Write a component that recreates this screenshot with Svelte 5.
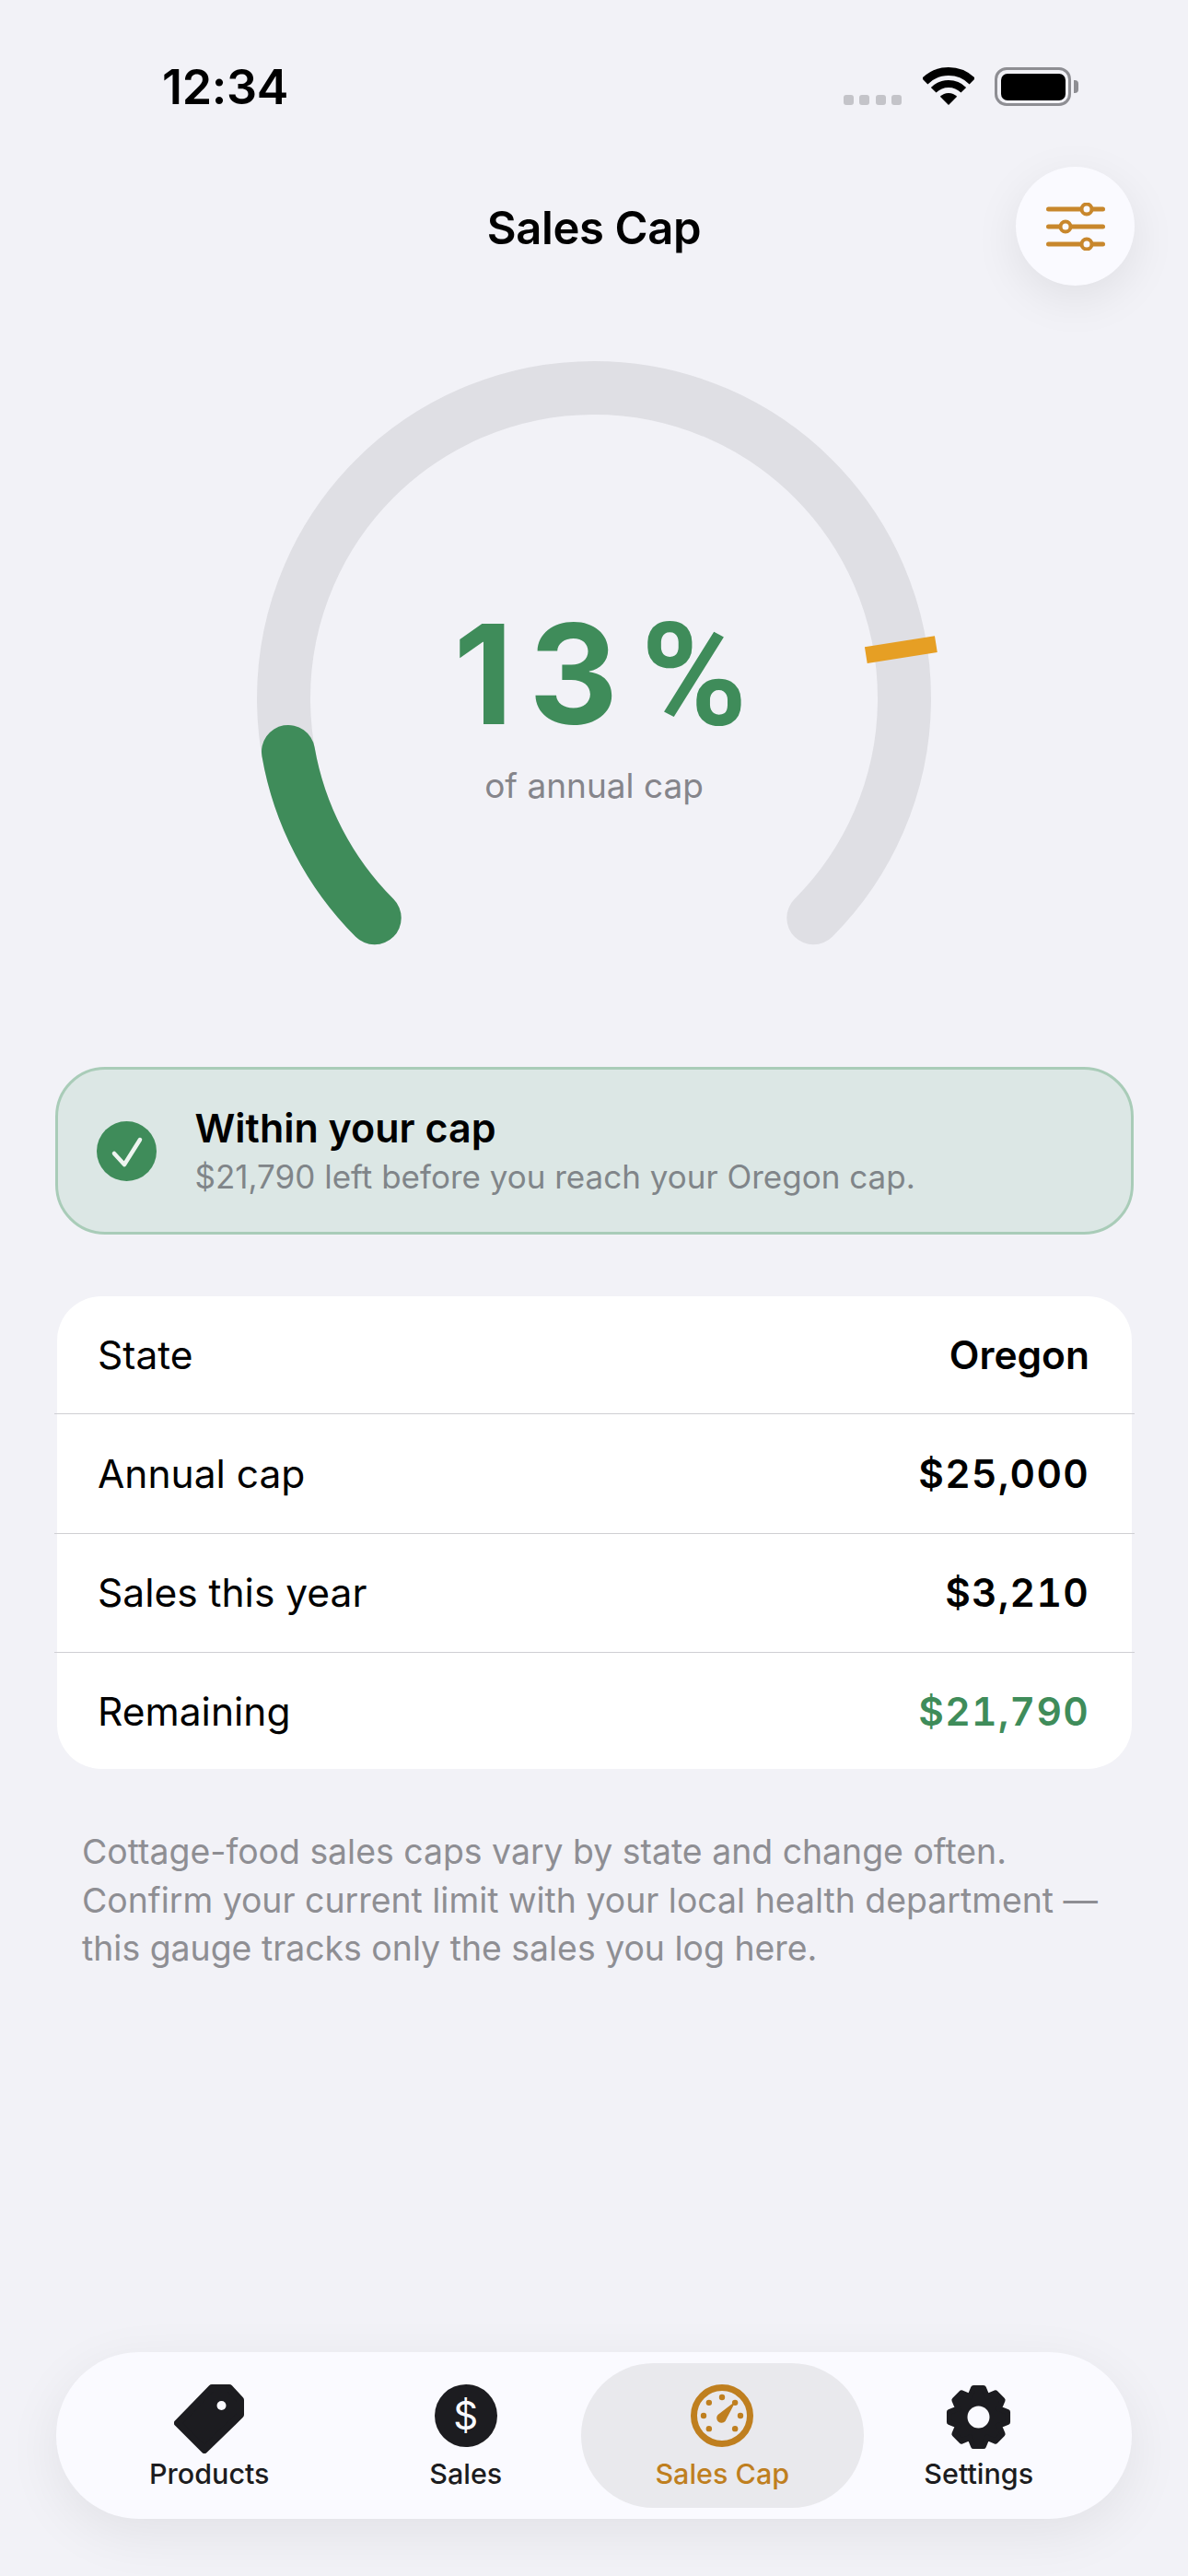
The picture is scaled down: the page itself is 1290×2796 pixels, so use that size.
<script>
	// gauge runs 270deg, starting bottom-left
	const percent = 13;
	const capMark = 80;
	const cx = 400;
	const cy = 386;
	const r = 337;

	function polar(pct, radius) {
		const deg = 135 + (pct / 100) * 270;
		const rad = (deg * Math.PI) / 180;
		return [cx + radius * Math.cos(rad), cy + radius * Math.sin(rad)];
	}

	function arc(pct) {
		const [x0, y0] = polar(0, r);
		const [x1, y1] = polar(pct, r);
		const large = (pct / 100) * 270 > 180 ? 1 : 0;
		return `M${x0} ${y0}A${r} ${r} 0 ${large} 1 ${x1} ${y1}`;
	}

	const trackPath = arc(100);
	const fillPath = arc(percent);
	const tickIn = polar(capMark, 299);
	const tickOut = polar(capMark, 376);

	function gearPoints() {
		const pts = [];
		for (let i = 0; i < 8; i++) {
			const a = (i * Math.PI) / 4 - Math.PI / 2;
			const add = (rad, off) =>
				pts.push(`${35.5 + rad * Math.cos(a + off)},${35.5 + rad * Math.sin(a + off)}`);
			add(24, -0.4);
			add(32, -0.17);
			add(32, 0.17);
			add(24, 0.4);
		}
		return pts.join(' ');
	}

	const dialDots = [0, 45, 90, 135, 225, 270, 315].map((deg) => {
		const rad = ((deg - 90) * Math.PI) / 180;
		return [34 + 20 * Math.cos(rad), 34 + 20 * Math.sin(rad)];
	});

	const rows = [
		{ label: 'State', value: 'Oregon' },
		{ label: 'Annual cap', value: '$25,000', money: true },
		{ label: 'Sales this year', value: '$3,210', money: true },
		{ label: 'Remaining', value: '$21,790', money: true, good: true }
	];
</script>

<div class="screen">
	<div class="status-bar">
		<span class="time">12:34</span>
		<div class="status-icons">
			<div class="signal"><i></i><i></i><i></i><i></i></div>
			<svg class="wifi" width="56" height="41" viewBox="0 0 56 41">
				<path d="M2.2 15.2A36.5 36.5 0 0 1 53.8 15.2" fill="none" stroke="#000" stroke-width="9" />
				<path d="M11.7 24.7A23 23 0 0 1 44.3 24.7" fill="none" stroke="#000" stroke-width="8" />
				<path d="M28 41L18.8 31.8A13 13 0 0 1 37.2 31.8Z" fill="#000" />
			</svg>
			<div class="battery"><div class="battery-fill"></div></div>
			<div class="battery-nub"></div>
		</div>
	</div>

	<header class="top-bar">
		<h1>Sales Cap</h1>
		<button class="round-btn" aria-label="Adjust">
			<svg width="64" height="52" viewBox="0 0 64 52" fill="none" stroke="#c8872c">
				<g stroke-width="5" stroke-linecap="round">
					<path d="M2.5 7H61.5" />
					<path d="M2.5 26H61.5" />
					<path d="M2.5 45H61.5" />
				</g>
				<g stroke-width="4" fill="#fafaff">
					<circle cx="44" cy="7" r="5.5" />
					<circle cx="21" cy="26" r="5.5" />
					<circle cx="44" cy="45" r="5.5" />
				</g>
			</svg>
		</button>
	</header>

	<div class="gauge">
		<svg width="800" height="668" viewBox="0 0 800 668" fill="none">
			<path d={trackPath} stroke="#dfdfe4" stroke-width="58" stroke-linecap="round" />
			<path d={fillPath} stroke="#3f8c5a" stroke-width="58" stroke-linecap="round" />
			<line x1={tickIn[0]} y1={tickIn[1]} x2={tickOut[0]} y2={tickOut[1]} stroke="#e69f24" stroke-width="18" />
		</svg>
		<div class="gauge-text">
			<div class="pct">{percent}<span class="pct-sign">%</span></div>
			<div class="pct-label">of annual cap</div>
		</div>
	</div>

	<div class="banner">
		<svg class="banner-icon" width="65" height="65" viewBox="0 0 65 65">
			<circle cx="32.5" cy="32.5" r="32.5" fill="#3f8c5a" />
			<path d="M19 35L30 47L47 20" fill="none" stroke="#eef4f0" stroke-width="4.5" stroke-linecap="round" stroke-linejoin="round" />
		</svg>
		<div>
			<div class="banner-title">Within your cap</div>
			<div class="banner-sub">$21,790 left before you reach your Oregon cap.</div>
		</div>
	</div>

	<div class="card">
		{#each rows as row}
			<div class="row">
				<span>{row.label}</span>
				<span class="value {row.money ? 'money' : ''} {row.good ? 'good' : ''}">{row.value}</span>
			</div>
		{/each}
	</div>

	<p class="note">
		Cottage-food sales caps vary by state and change often.
		Confirm your current limit with your local health department —
		this gauge tracks only the sales you log here.
	</p>

	<nav class="tabs">
		<div class="tab">
			<svg width="76" height="75" viewBox="0 0 76 75">
				<path
					d="M41 4H60L72 17V33L33 71L4 42Z"
					fill="#1c1c20"
					stroke="#1c1c20"
					stroke-width="8"
					stroke-linejoin="round"
				/>
				<circle cx="51.5" cy="23" r="5" fill="#fafaff" />
			</svg>
			<span>Products</span>
		</div>
		<div class="tab">
			<div class="coin">$</div>
			<span>Sales</span>
		</div>
		<div class="tab active">
			<svg width="68" height="68" viewBox="0 0 68 68">
				<circle cx="34" cy="34" r="30.5" fill="none" stroke="#bf7f1f" stroke-width="7" />
				{#each dialDots as dot}
					<circle cx={dot[0]} cy={dot[1]} r="3.2" fill="#bf7f1f" />
				{/each}
				<path d="M49 18L37.5 40A5 5 0 0 1 29.5 33Z" fill="#bf7f1f" />
			</svg>
			<span>Sales Cap</span>
		</div>
		<div class="tab">
			<svg width="71" height="71" viewBox="0 0 71 71">
				<polygon points={gearPoints()} fill="#1c1c20" stroke="#1c1c20" stroke-width="6" stroke-linejoin="round" />
				<circle cx="35.5" cy="35.5" r="12" fill="#fafaff" />
			</svg>
			<span>Settings</span>
		</div>
	</nav>
</div>

<style>
	:global(body) {
		background: #f2f2f7;
	}

	.screen {
		width: 1290px;
		height: 2796px;
		display: flex;
		flex-direction: column;
		box-sizing: border-box;
		font-family: Inter, 'Liberation Sans', sans-serif;
		color: #000;
		background: #f2f2f7;
		overflow: hidden;
	}

	.status-bar {
		height: 181px;
		flex-shrink: 0;
		box-sizing: border-box;
		padding: 70px 119px 0 176px;
		display: flex;
		justify-content: space-between;
		align-items: flex-start;
	}

	.time {
		font-size: 52px;
		font-weight: 600;
		line-height: 50px;
		letter-spacing: -0.3px;
	}

	.status-icons {
		display: flex;
		align-items: flex-end;
		height: 42px;
		margin-top: 3px;
	}

	.signal {
		display: flex;
		gap: 6.5px;
		margin-right: 23px;
		margin-bottom: 1px;
	}

	.signal i {
		width: 11px;
		height: 11px;
		border-radius: 3px;
		background: #c4c4c9;
	}

	.wifi {
		margin-right: 22px;
		margin-bottom: 1px;
	}

	.battery {
		width: 83px;
		height: 42px;
		box-sizing: border-box;
		border: 3.5px solid #8e8e93;
		border-radius: 13px;
		padding: 3.5px;
	}

	.battery-fill {
		height: 100%;
		background: #000;
		border-radius: 7px;
	}

	.battery-nub {
		width: 5px;
		height: 14px;
		margin: 0 0 14px 3px;
		background: #8e8e93;
		border-radius: 0 4px 4px 0;
	}

	.top-bar {
		height: 129px;
		flex-shrink: 0;
		display: grid;
		grid-template-columns: 1fr auto 1fr;
		align-items: center;
		padding: 0 58px;
	}

	.top-bar h1 {
		grid-column: 2;
		margin: 4px 0 0;
		font-size: 49px;
		font-weight: 600;
		letter-spacing: -0.4px;
	}

	.round-btn {
		grid-column: 3;
		justify-self: end;
		width: 129px;
		height: 129px;
		border: none;
		padding: 0;
		border-radius: 50%;
		background: #fafaff;
		box-shadow: 0 14px 50px rgba(0, 0, 0, 0.08);
		display: flex;
		align-items: center;
		justify-content: center;
	}

	.gauge {
		position: relative;
		width: 800px;
		height: 668px;
		margin: 62px auto 0;
		flex-shrink: 0;
	}

	.gauge svg {
		display: block;
	}

	.gauge-text {
		position: absolute;
		left: 0;
		right: 0;
		top: 295px;
		text-align: center;
	}

	.pct {
		font-size: 150px;
		font-weight: 700;
		line-height: 130px;
		letter-spacing: 17px;
		color: #3f8c5a;
		padding-left: 14px;
	}

	.pct-sign {
		font-family: Roboto, sans-serif;
		font-size: 156px;
		letter-spacing: 0;
		margin-left: 8px;
	}

	.pct-label {
		font-size: 37px;
		line-height: 46px;
		margin-top: 32px;
		color: #85858b;
	}

	.banner {
		margin: 118px 59px 0 60px;
		height: 182px;
		flex-shrink: 0;
		box-sizing: border-box;
		border: 3px solid #a9ccb8;
		border-radius: 54px;
		background: #dce7e5;
		display: flex;
		align-items: center;
		gap: 41.5px;
		padding-left: 42px;
	}

	.banner-icon {
		flex-shrink: 0;
	}

	.banner-title {
		font-size: 43px;
		font-weight: 600;
		line-height: 50px;
	}

	.banner-sub {
		font-size: 35px;
		line-height: 46px;
		margin-top: 5px;
		color: #808589;
	}

	.card {
		margin: 67px 61px 0 62px;
		background: #fff;
		border-radius: 48px;
		flex-shrink: 0;
	}

	.row {
		height: 129.5px;
		box-sizing: border-box;
		display: flex;
		justify-content: space-between;
		align-items: center;
		padding: 0 46px 0 44px;
		font-size: 42.5px;
	}

	.row:first-child,
	.row:last-child {
		height: 127px;
	}

	.row + .row {
		border-top: 1.5px solid #cfcfd3;
		margin: 0 -3px;
		padding: 0 49px 0 47px;
	}

	.value {
		font-weight: 600;
	}

	.value.money {
		font-variant-numeric: tabular-nums;
		letter-spacing: 1.3px;
	}

	.value.good {
		color: #3f8c5a;
	}

	.note {
		margin: 64px 0 0 89px;
		width: 1115px;
		font-size: 37.4px;
		line-height: 52.5px;
		color: #8e8e93;
		flex-shrink: 0;
	}

	.tabs {
		margin: auto 61px 62px 61px;
		height: 181px;
		flex-shrink: 0;
		box-sizing: border-box;
		padding: 12px 27px;
		display: grid;
		grid-template-columns: repeat(4, 1fr);
		background: #fafaff;
		border-radius: 90px;
		box-shadow: 0 16px 60px rgba(0, 0, 0, 0.07);
	}

	.tab {
		display: flex;
		flex-direction: column;
		align-items: center;
		justify-content: space-between;
		padding: 23px 0 19px;
		color: #1c1c20;
		font-size: 30.5px;
		font-weight: 500;
		line-height: 36px;
		border-radius: 79px;
	}

	.tab svg,
	.coin {
		flex-shrink: 0;
	}

	.tab.active {
		margin: 0 -14px;
		background: #e9e9ed;
		color: #bf7f1f;
	}

	.coin {
		width: 68px;
		height: 68px;
		border-radius: 50%;
		background: #1c1c20;
		color: #fafaff;
		font-size: 42px;
		font-weight: 400;
		line-height: 68px;
		text-align: center;
	}
</style>
